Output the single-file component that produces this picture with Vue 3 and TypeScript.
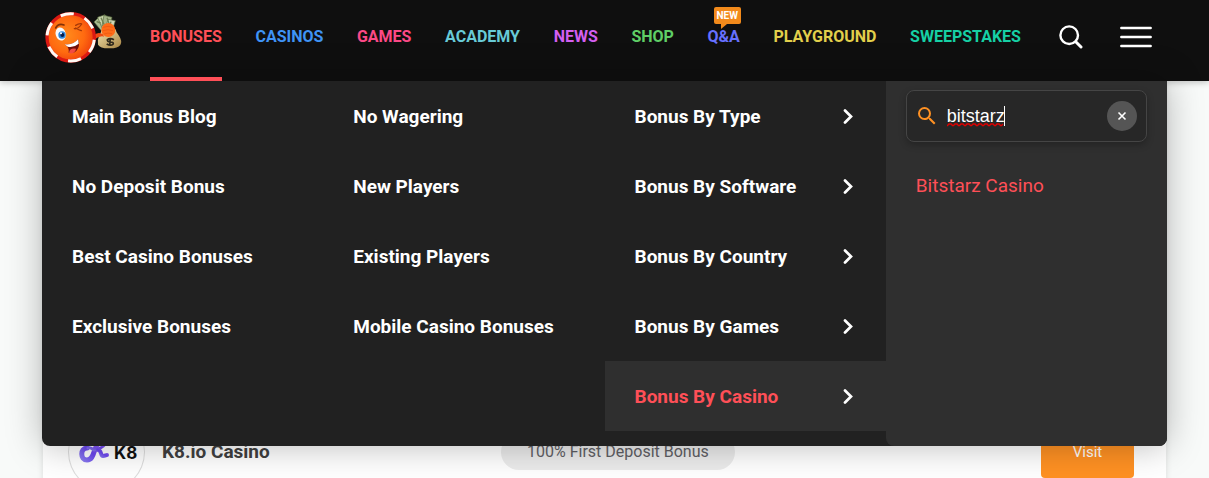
<script setup lang="ts">
import { ref } from 'vue'

interface NavLink {
  label: string
  tone: string
  active?: boolean
  badge?: string
}

const navLinks: NavLink[] = [
  { label: 'BONUSES', tone: 'red', active: true },
  { label: 'CASINOS', tone: 'blue' },
  { label: 'GAMES', tone: 'pink' },
  { label: 'ACADEMY', tone: 'cyan' },
  { label: 'NEWS', tone: 'purple' },
  { label: 'SHOP', tone: 'green' },
  { label: 'Q&A', tone: 'indigo', badge: 'NEW' },
  { label: 'PLAYGROUND', tone: 'yellow' },
  { label: 'SWEEPSTAKES', tone: 'teal' },
]

const columns: string[][] = [
  ['Main Bonus Blog', 'No Deposit Bonus', 'Best Casino Bonuses', 'Exclusive Bonuses'],
  ['No Wagering', 'New Players', 'Existing Players', 'Mobile Casino Bonuses'],
]

const groups: string[] = [
  'Bonus By Type',
  'Bonus By Software',
  'Bonus By Country',
  'Bonus By Games',
  'Bonus By Casino',
]

const activeGroup = ref('Bonus By Casino')
const query = ref('bitstarz')
const results: string[] = ['Bitstarz Casino']
</script>

<template>
  <div class="page">
    <header class="header">
      <div class="container bar">
        <a class="logo" href="#" aria-label="Home">
          <svg viewBox="42 30 240 165" width="80" height="55" aria-hidden="true">
            <defs>
              <radialGradient id="chip" cx="42%" cy="45%" r="62%">
                <stop offset="0" stop-color="#ff8a1c" />
                <stop offset="0.6" stop-color="#ff6a10" />
                <stop offset="1" stop-color="#ee3d0c" />
              </radialGradient>
              <linearGradient id="bag" x1="0" y1="0" x2="1" y2="1">
                <stop offset="0" stop-color="#f1e3ad" />
                <stop offset="1" stop-color="#a88443" />
              </linearGradient>
            </defs>
            <g stroke="#56683e" stroke-width="2">
              <path d="M192 66l16-16 24 28-18 14z" fill="#a9b990" />
              <path d="M203 52l22-8 12 34-20 8z" fill="#c8d2ab" />
              <path d="M222 46l24 6-8 33-22-8z" fill="#a5b488" />
              <path d="M234 58l22 4-8 26-22-2z" fill="#ced6b6" />
            </g>
            <path d="M200 65l12 4M213 53l10 22M231 53l7 20M243 65l-5 16" stroke="#708052" stroke-width="4" />
            <path d="M215 88q18 10 42 0q1 10 9 18q12 18 5 29q-8 11-35 10q-26 0-32-11q-3-12 3-26q6-8 8-20z" fill="url(#bag)" />
            <path d="M190 107q12-13 28-5l5 8q-16-4-31 10z" fill="#ee4a13" />
            <circle cx="235" cy="90" r="21" fill="#ff6b18" />
            <path d="M220 82q14-6 28 0M219 92q15-6 30 0M222 102q12-5 24-1" fill="none" stroke="#e8540f" stroke-width="2" />
            <path d="M252 119q-12-6-20 0q-1 6 9 7q12 1 8 7q-7 5-19-1M241 114l-2 22" fill="none" stroke="#30291c" stroke-width="5" />
            <circle cx="122" cy="112" r="70" fill="url(#chip)" />
            <circle cx="122" cy="112" r="71" fill="none" stroke="#db1913" stroke-width="10" />
            <circle cx="122" cy="112" r="71" fill="none" stroke="#fffaf4" stroke-width="9" stroke-dasharray="40 34.350" transform="rotate(64 122 112)" />
            <path d="M77 84q8-15 25-9" fill="none" stroke="#833006" stroke-width="5" stroke-linecap="round" />
            <path d="M133 86q12 2 22-14M137 84q10 6 17 8M137 76q9-6 16-5" fill="none" stroke="#a63807" stroke-width="4" stroke-linecap="round" />
            <ellipse cx="92" cy="102" rx="15" ry="20" fill="#f5faff" transform="rotate(-15 92 102)" />
            <circle cx="96" cy="105" r="11" fill="#2c87d9" />
            <circle cx="97" cy="105" r="6" fill="#071d49" />
            <circle cx="93" cy="100" r="3" fill="#fff" />
            <path d="M104 133q26 3 40-15q8 21-5 35q-9 9-23 5q3-15-12-25z" fill="#741009" />
            <path d="M104 133q26 3 40-15q2 7 2 13q-15 13-33 9z" fill="#fff" />
            <path d="M117 158q2-15 21-12q0 8-8 13q-7 3-13-1z" fill="#f24b43" />
          </svg>
        </a>
        <nav class="nav" aria-label="Main">
          <a
            v-for="link in navLinks"
            :key="link.label"
            href="#"
            class="nav-link"
            :class="[link.tone, { active: link.active }]"
          >
            {{ link.label }}
            <span v-if="link.badge" class="badge">{{ link.badge }}</span>
          </a>
        </nav>
        <div class="actions">
          <button class="icon-button" type="button" aria-label="Search">
            <svg viewBox="0 0 24 24" width="24" height="24" fill="none" stroke="#fff" stroke-linecap="round" aria-hidden="true">
              <circle cx="10.200" cy="10.200" r="8.800" stroke-width="2.400" />
              <path d="M17 17l5 5" stroke-width="3" />
            </svg>
          </button>
          <button class="icon-button" type="button" aria-label="Menu">
            <svg viewBox="0 0 32 22" width="32" height="22" stroke="#fff" stroke-width="2.400" stroke-linecap="round" aria-hidden="true">
              <path d="M1.300 2h29.400M1.300 11h29.400M1.300 20h29.400" />
            </svg>
          </button>
        </div>
      </div>
      <div class="container menu">
        <ul v-for="(items, i) in columns" :key="i" class="column">
          <li v-for="item in items" :key="item">
            <a href="#" class="item">{{ item }}</a>
          </li>
        </ul>
        <ul class="column">
          <li v-for="group in groups" :key="group">
            <a
              href="#"
              class="item"
              :class="{ selected: group === activeGroup }"
              @mouseenter="activeGroup = group"
            >
              <span>{{ group }}</span>
              <svg viewBox="0 0 10 16" width="10" height="16" fill="none" stroke="#fff" stroke-width="2.700" stroke-linecap="round" stroke-linejoin="miter" aria-hidden="true">
                <path d="M2 2.500l6 6-6 6" />
              </svg>
            </a>
          </li>
        </ul>
        <div class="finder">
          <div class="search">
            <svg class="search-icon" viewBox="3 3 18 18" width="18" height="18" aria-hidden="true">
              <path fill="#ff9123" d="M15.500 14h-.79l-.28-.27A6.471 6.471 0 0 0 16 9.500 6.500 6.500 0 1 0 9.500 16c1.610 0 3.090-.59 4.230-1.570l.27.28v.79l5 4.990L20.490 19l-4.990-5zm-6 0C7.010 14 5 11.990 5 9.500S7.010 5 9.500 5 14 7.010 14 9.500 11.990 14 9.500 14z" />
            </svg>
            <div class="field">
              <input v-model="query" class="input" type="text" aria-label="Search casino" spellcheck="false" />
              <svg class="squiggle" viewBox="0 0 57 4" width="57" height="4" fill="none" stroke="#e00000" aria-hidden="true">
                <path stroke-width="1.400" d="M0 3l2-2h2l2 2M6 3l2-2h2l2 2M12 3l2-2h2l2 2M18 3l2-2h2l2 2M24 3l2-2h2l2 2M30 3l2-2h2l2 2M36 3l2-2h2l2 2M42 3l2-2h2l2 2M48 3l2-2h2l2 2M54 3l2-2" />
              </svg>
              <span class="caret"></span>
            </div>
            <button class="clear" type="button" aria-label="Clear" @click="query = ''">
              <svg viewBox="0 0 10 10" width="10" height="10" stroke="#fff" stroke-width="1.600" aria-hidden="true">
                <path d="M1.500 1.500l7 7M8.500 1.500l-7 7" />
              </svg>
            </button>
          </div>
          <a v-for="result in results" :key="result" href="#" class="result">{{ result }}</a>
        </div>
      </div>
    </header>

    <main class="card">
      <article class="offer">
        <div class="brand">
          <svg viewBox="0 0 62 30" width="62" height="30" aria-hidden="true">
            <defs>
              <linearGradient id="k8" x1="0" y1="1" x2="1" y2="0">
                <stop offset="0" stop-color="#8a7bf0" />
                <stop offset="0.5" stop-color="#6b46ef" />
                <stop offset="1" stop-color="#8d5cf5" />
              </linearGradient>
            </defs>
            <g fill="none" stroke="url(#k8)" stroke-linecap="round" stroke-linejoin="round">
              <path stroke-width="5" d="M11 11C4 11 4 23 11 23c8 0 6-13 12-17" />
              <path stroke-width="3" d="M12 11c3-1 4 1 6 2 6-1 10-4 12-7" />
              <path stroke-width="4" d="M22 13c4 0 2 6 5 6 2 0 3-1 4-1" />
            </g>
            <text x="38" y="22" class="brand-text">K8</text>
          </svg>
        </div>
        <h2 class="offer-name">K8.io Casino</h2>
        <div class="offer-bonus"><span class="pill">100% First Deposit Bonus</span></div>
        <a class="visit" href="#">Visit</a>
      </article>
    </main>
  </div>
</template>

<style>
body {
  margin: 0;
  background: #f8faf9;
}
</style>

<style scoped>
.page {
  height: 100vh;
  overflow: hidden;
  background: #f8faf9;
  font-family: Roboto, "Liberation Sans", sans-serif;
}

.container {
  box-sizing: border-box;
  width: calc(100% - 84px);
  max-width: 1125px;
  margin: 0 auto;
}

.header {
  position: relative;
  z-index: 2;
  background: #0f0f0f;
  box-shadow: 0 2px 6px rgba(0, 0, 0, 0.2);
}

.bar {
  position: relative;
  z-index: 1;
  display: flex;
  align-items: center;
  height: 81px;
}

.logo {
  width: 80px;
  height: 55px;
  margin: 0 26px 6px 2px;
}

.nav {
  display: flex;
  flex: 1;
  justify-content: space-between;
}

.nav-link {
  position: relative;
  height: 77px;
  line-height: 73px;
  border-bottom: 4px solid transparent;
  font-size: 16px;
  font-weight: 700;
  text-decoration: none;
  white-space: nowrap;
}

.nav-link.active { border-color: #ff4f57; }
.red { color: #ff4f57; }
.blue { color: #3f93f5; }
.pink { color: #fc4986; }
.cyan { color: #68cad6; }
.purple { color: #d35ff0; }
.green { color: #5fce66; }
.indigo { color: #6670ff; }
.yellow { color: #e2cf4b; }
.teal { color: #16d0a5; }

.badge {
  position: absolute;
  top: 7px;
  left: 6px;
  padding: 0 3px;
  border-radius: 2px;
  background: #f28a1b;
  color: #fff;
  font-size: 10px;
  line-height: 17px;
}

.badge::after {
  content: "";
  position: absolute;
  top: 17px;
  left: 7px;
  border-top: 5px solid #f28a1b;
  border-right: 6px solid transparent;
}

.actions {
  display: flex;
  align-items: center;
  gap: 37px;
  margin: 0 15px 7px 38px;
}

.icon-button {
  display: flex;
  padding: 0;
  border: 0;
  background: none;
}

.menu {
  position: absolute;
  top: 81px;
  right: 0;
  left: 0;
  display: grid;
  grid-template-columns: repeat(4, 1fr);
  border-radius: 0 0 8px 8px;
  background: #212121;
  box-shadow: 0 0 36px rgba(0, 0, 0, 0.28);
}

.column {
  margin: 0;
  padding: 0 0 15px;
  list-style: none;
}

.item {
  display: flex;
  align-items: center;
  justify-content: space-between;
  height: 70px;
  padding: 0 33px 0 30px;
  color: #fff;
  font-size: 19px;
  font-weight: 700;
  text-decoration: none;
  white-space: nowrap;
}

.item.selected {
  background: #2f2f2f;
  color: #ff4f57;
}

.finder {
  padding: 9px 20px;
  border-radius: 0 0 8px 8px;
  background: #2f2f2f;
}

.search {
  display: flex;
  align-items: center;
  box-sizing: border-box;
  height: 52px;
  padding: 0 9px 0 11px;
  border: 1px solid #454545;
  border-radius: 8px;
  background: #272727;
  box-shadow: 0 3px 7px rgba(0, 0, 0, 0.25);
}

.search-icon { flex: none; }

.field {
  position: relative;
  flex: 1;
  min-width: 0;
  margin-left: 11px;
}

.input {
  display: block;
  width: 100%;
  height: 24px;
  padding: 0;
  border: 0;
  outline: 0;
  background: transparent;
  color: #fff;
  font: 18px "Liberation Sans", Arial, sans-serif;
}

.squiggle {
  position: absolute;
  top: 19px;
  left: 0;
}

.caret {
  position: absolute;
  top: 2px;
  left: 57px;
  width: 1px;
  height: 20px;
  background: #fff;
}

.clear {
  display: flex;
  flex: none;
  align-items: center;
  justify-content: center;
  width: 30px;
  height: 30px;
  padding: 0;
  border: 0;
  border-radius: 50%;
  background: #555;
}

.result {
  display: block;
  padding: 32px 10px;
  color: #ff4f57;
  font-size: 19px;
  line-height: 24px;
  text-decoration: none;
}

.card {
  box-sizing: border-box;
  width: calc(100% - 86px);
  max-width: 1123px;
  margin: 0 auto;
  padding: 332px 32px 20px 25px;
  background: #fff;
  box-shadow: 0 0 6px rgba(0, 0, 0, 0.12);
}

.offer {
  display: flex;
  align-items: center;
}

.brand {
  display: flex;
  align-items: center;
  justify-content: center;
  box-sizing: border-box;
  width: 77px;
  height: 78px;
  border: 1px solid #ddd;
  border-radius: 50%;
}

.brand-text {
  fill: #111;
  font: 700 17px Inter, sans-serif;
}

.offer-name {
  width: 260px;
  margin: 0 0 0 17px;
  color: #404040;
  font-size: 19px;
  line-height: 24px;
  font-weight: 700;
}

.offer-bonus {
  flex: 1;
  display: flex;
  padding-left: 79px;
}

.pill {
  padding: 0 26px;
  border-radius: 18px;
  background: #ececec;
  color: #606065;
  font-size: 16px;
  line-height: 36px;
}

.visit {
  width: 93px;
  border-radius: 4px;
  background: #ff9123;
  color: #fff;
  font-size: 15px;
  line-height: 52px;
  text-align: center;
  text-decoration: none;
}
</style>
